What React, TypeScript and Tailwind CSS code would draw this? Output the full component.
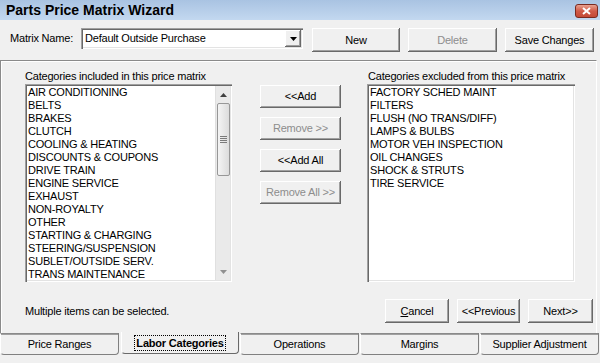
import React from "react";

const raised =
  "bg-[#f0f0f0] shadow-[inset_-1px_-1px_0_#696969,inset_1px_1px_0_#ffffff,inset_-2px_-2px_0_#a0a0a0,inset_2px_2px_0_#f0f0f0]";
const sunken =
  "bg-white shadow-[inset_1px_1px_0_#a0a0a0,inset_2px_2px_0_#696969,inset_-1px_-1px_0_#ffffff,inset_-2px_-2px_0_#e3e3e3]";

const included = [
  "AIR CONDITIONING",
  "BELTS",
  "BRAKES",
  "CLUTCH",
  "COOLING & HEATING",
  "DISCOUNTS & COUPONS",
  "DRIVE TRAIN",
  "ENGINE SERVICE",
  "EXHAUST",
  "NON-ROYALTY",
  "OTHER",
  "STARTING & CHARGING",
  "STEERING/SUSPENSION",
  "SUBLET/OUTSIDE SERV.",
  "TRANS MAINTENANCE",
];

const excluded = [
  "FACTORY SCHED MAINT",
  "FILTERS",
  "FLUSH (NO TRANS/DIFF)",
  "LAMPS & BULBS",
  "MOTOR VEH INSPECTION",
  "OIL CHANGES",
  "SHOCK & STRUTS",
  "TIRE SERVICE",
];

const tabs = ["Price Ranges", "Labor Categories", "Operations", "Margins", "Supplier Adjustment"];

function Btn({ label, w, h = 24, disabled = false }: { label: React.ReactNode; w: number; h?: number; disabled?: boolean }) {
  return (
    <div
      className={`${raised} flex items-center justify-center shrink-0 ${disabled ? "text-[#8d8d8d]" : "text-black"}`}
      style={{ width: w, height: h }}
    >
      {label}
    </div>
  );
}

function ListBox({ items, scroll = false, w }: { items: string[]; scroll?: boolean; w: number }) {
  return (
    <div className={`${sunken} h-[198px] p-[2px] flex`} style={{ width: w }}>
      <div className="flex-1 pl-[1px] overflow-hidden">
        {items.map((it) => (
          <div key={it} className="h-[13px] leading-[13px] whitespace-nowrap">
            {it}
          </div>
        ))}
      </div>
      {scroll && (
        <div className="w-[15px] h-full bg-[#eaeaea] flex flex-col items-center border-l border-[#e0e0e0]">
          <div className="h-[17px] w-full flex items-center justify-center">
            <svg width="7" height="4" viewBox="0 0 7 4">
              <path d="M0 4 L3.5 0 L7 4 Z" fill="#404040" />
            </svg>
          </div>
          <div className="w-[13px] h-[73px] rounded-[2px] border border-[#979797] bg-gradient-to-r from-[#f4f4f4] to-[#dcdcdc] flex flex-col items-center justify-center gap-[1px]">
            <div className="w-[7px] h-[1px] bg-[#7a7a7a]" />
            <div className="w-[7px] h-[1px] bg-[#7a7a7a]" />
            <div className="w-[7px] h-[1px] bg-[#7a7a7a]" />
            <div className="w-[7px] h-[1px] bg-[#7a7a7a]" />
          </div>
          <div className="flex-1" />
          <div className="h-[17px] w-full flex items-center justify-center">
            <svg width="7" height="4" viewBox="0 0 7 4">
              <path d="M0 0 L3.5 4 L7 0 Z" fill="#909090" />
            </svg>
          </div>
        </div>
      )}
    </div>
  );
}

export default function App() {
  return (
    <div
      className="w-[600px] h-[363px] bg-[#f0f0f0] flex flex-col overflow-hidden text-[11px] tracking-[-0.2px] text-black"
      style={{ fontFamily: "'Liberation Sans', Arial, sans-serif" }}
    >
      {/* title bar */}
      <div className="h-[20px] shrink-0 bg-gradient-to-b from-[#a9c3e2] to-[#c3d8f0] flex items-start justify-between pl-[6px] pr-[2px]">
        <span className="text-[14px] font-bold tracking-normal leading-[20px] text-black">Parts Price Matrix Wizard</span>
        <div className="mt-[4px] w-[23px] h-[14px] rounded-[3px] border border-[#7a2a20] bg-gradient-to-b from-[#e8a090] via-[#d05a48] to-[#c44a36] flex items-center justify-center">
          <svg width="9" height="8" viewBox="0 0 9 8">
            <path d="M1 1 L8 7 M8 1 L1 7" stroke="#ffffff" strokeWidth="2" />
          </svg>
        </div>
      </div>

      {/* matrix name row */}
      <div className="h-[40px] shrink-0 flex items-start pt-[8px] pl-[10px]">
        <span className="w-[71px] leading-[21px]">Matrix Name:</span>
        <div className={`${sunken} w-[222px] h-[21px] p-[2px] flex`}>
          <span className="flex-1 pl-[2px] leading-[17px]">Default Outside Purchase</span>
          <div className={`${raised} w-[16px] h-[17px] flex items-center justify-center`}>
            <svg width="7" height="4" viewBox="0 0 7 4">
              <path d="M0 0 L3.5 4 L7 0 Z" fill="#000000" />
            </svg>
          </div>
        </div>
        <div className="ml-[9px] flex gap-[8px]">
          <Btn label="New" w={88} />
          <Btn label="Delete" w={89} disabled />
          <Btn label="Save Changes" w={89} />
        </div>
      </div>

      {/* main panel */}
      <div className="h-[273px] w-[597px] shrink-0 border-t border-l border-[#8a8a8a] border-r border-r-[#ffffff] shadow-[inset_1px_1px_0_#ffffff] flex flex-col pt-[9px] pl-[24px]">
        <div className="flex">
          <div className="flex flex-col w-[207px]">
            <div className="h-[13px] leading-[13px] mb-[1px] whitespace-nowrap">Categories included in this price matrix</div>
            <ListBox items={included} scroll w={207} />
          </div>
          <div className="ml-[28px] pt-[15px] flex flex-col gap-[9px]">
            <Btn label="<<Add" w={81} h={23} />
            <Btn label="Remove >>" w={81} h={23} disabled />
            <Btn label="<<Add All" w={81} h={23} />
            <Btn label="Remove All >>" w={81} h={23} disabled />
          </div>
          <div className="ml-[26px] flex flex-col w-[208px]">
            <div className="h-[13px] leading-[13px] mb-[1px] pl-[1px] whitespace-nowrap">Categories excluded from this price matrix</div>
            <ListBox items={excluded} w={208} />
          </div>
        </div>
        <div className="mt-[17px] flex items-center pr-[3px]">
          <span className="flex-1">Multiple items can be selected.</span>
          <div className="flex gap-[8px]">
            <Btn
              w={64}
              label={
                <span>
                  <span className="underline">C</span>ancel
                </span>
              }
            />
            <Btn label="<<Previous" w={63} />
            <Btn label="Next>>" w={65} />
          </div>
        </div>
      </div>

      {/* tabs */}
      <div className="h-[22px] shrink-0 flex gap-[1px]">
        {tabs.map((t, i) =>
          i === 1 ? (
            <div
              key={t}
              className="w-[118px] h-[22px] -mt-[1px] ml-[1px] border-x border-b border-x-[#ffffff] border-r-[#696969] border-b-[#696969] rounded-b-[4px] flex items-center justify-center"
            >
              <span className="font-bold leading-[14px] px-[1px] outline outline-1 outline-dotted outline-black">{t}</span>
            </div>
          ) : (
            <div
              key={t}
              className="w-[119px] h-[22px] border border-t-[#8a8a8a] border-l-[#ffffff] border-r-[#808080] border-b-[#808080] rounded-b-[4px] shadow-[inset_0_1px_0_#a0a0a0] flex items-center justify-center"
            >
              {t}
            </div>
          )
        )}
      </div>
    </div>
  );
}
